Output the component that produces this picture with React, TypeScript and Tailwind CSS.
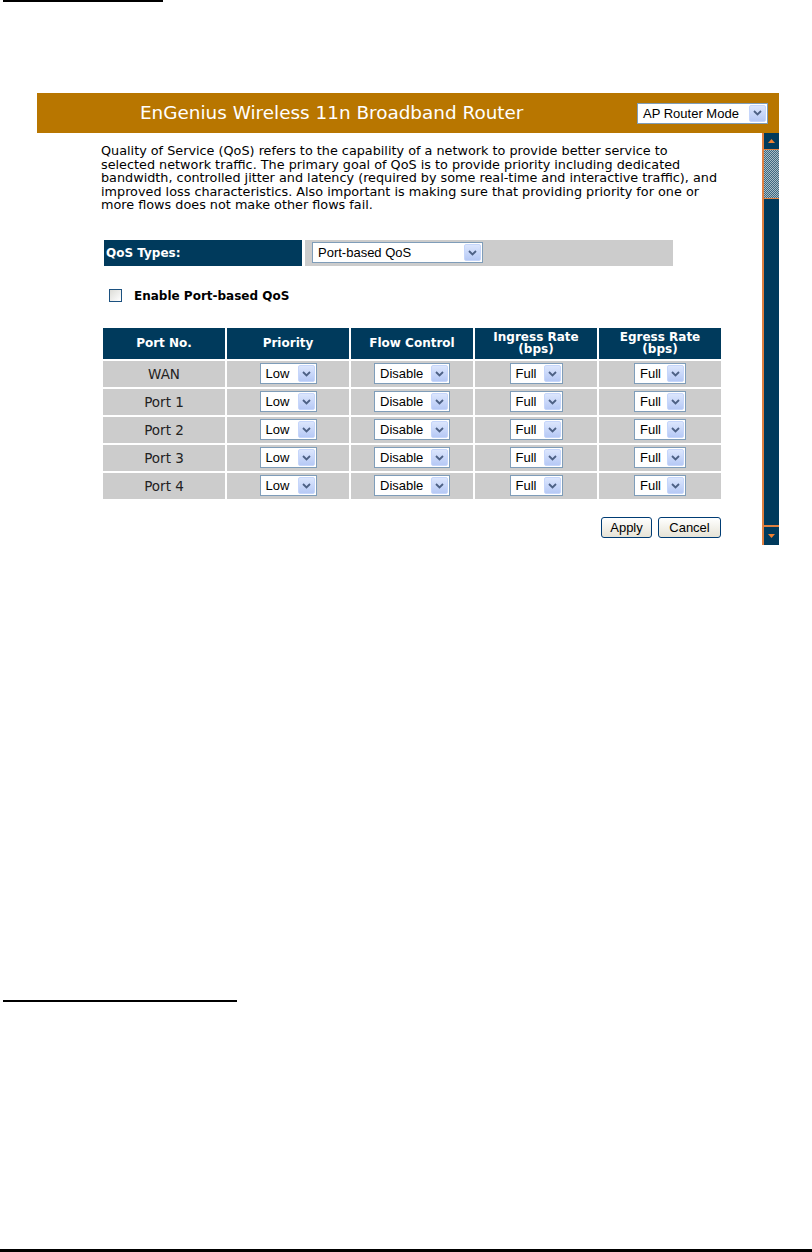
import React from "react";

const Chevron = () => (
  <svg width="9" height="6" viewBox="0 0 9 6">
    <path d="M1 1 L4.5 4.5 L8 1" fill="none" stroke="#4d6185" strokeWidth="1.8" />
  </svg>
);

function Select({ text, className }: { text: string; className: string }) {
  return (
    <div className={"flex h-[21px] items-center border border-[#7f9db9] bg-white " + className}>
      <span className="flex-1 whitespace-nowrap pl-[5px] font-['Liberation_Sans',Arial,sans-serif] text-[13px] leading-none text-black">
        {text}
      </span>
      <span className="mr-px flex h-[17px] w-[17px] items-center justify-center rounded-[2px] border border-[#c6d6fb] bg-gradient-to-b from-[#dce6fd] to-[#b6c9f5]">
        <Chevron />
      </span>
    </div>
  );
}

function Btn({ label, className }: { label: string; className: string }) {
  return (
    <div
      className={
        "flex h-[21px] items-center justify-center rounded-[3px] border border-[#003c74] bg-gradient-to-b from-[#ffffff] to-[#e6e3d6] font-['Liberation_Sans',Arial,sans-serif] text-[13px] text-black " +
        className
      }
    >
      {label}
    </div>
  );
}

const rows = ["WAN", "Port 1", "Port 2", "Port 3", "Port 4"];

export default function App() {
  return (
    <div className="relative h-[1252px] w-[812px] overflow-hidden bg-white font-['DejaVu_Sans',Verdana,sans-serif]">
      <div className="ml-[3px] h-[2px] w-[160px] bg-black" />
      <div className="h-[91px]" />
      <div className="ml-[37px] w-[742px]">
        {/* header */}
        <div className="flex h-[40px] items-center bg-[#b87600]">
          <div className="pl-[103px] text-[18.4px] text-white">EnGenius Wireless 11n Broadband Router</div>
          <div className="flex-1" />
          <Select text="AP Router Mode" className="mr-[11px] w-[131px]" />
        </div>
        {/* body */}
        <div className="flex h-[412px]">
          <div className="flex-1 pl-[64px] pt-[11px]">
            <p className="whitespace-nowrap text-[12.8px] leading-[13.6px] text-black">
              Quality of Service (QoS) refers to the capability of a network to provide better service to
              <br />
              selected network traffic. The primary goal of QoS is to provide priority including dedicated
              <br />
              bandwidth, controlled jitter and latency (required by some real-time and interactive traffic), and
              <br />
              improved loss characteristics. Also important is making sure that providing priority for one or
              <br />
              more flows does not make other flows fail.
            </p>
            <div className="ml-[3px] mt-[28px] flex h-[26px] w-[569px] gap-[3px]">
              <div className="flex w-[198px] items-center bg-[#003a5c] pl-[2px] text-[12px] font-bold text-white">QoS Types:</div>
              <div className="flex flex-1 items-center bg-[#cccccc] pl-[7px]">
                <Select text="Port-based QoS" className="w-[171px]" />
              </div>
            </div>
            <div className="ml-[8px] mt-[20px] flex h-[20px] items-center">
              <div className="h-[13px] w-[13px] border border-[#1c5180] bg-gradient-to-br from-[#dcdcd7] to-[#ffffff]" />
              <span className="ml-[12px] text-[12px] font-bold text-black">Enable Port-based QoS</span>
            </div>
            <div className="ml-[2px] mt-[22px] grid w-[618px] grid-cols-5 gap-[2px]">
              {["Port No.", "Priority", "Flow Control"].map((h) => (
                <div key={h} className="flex h-[31px] items-center justify-center bg-[#003a5c] text-[12px] font-bold text-white">
                  {h}
                </div>
              ))}
              {["Ingress Rate", "Egress Rate"].map((h) => (
                <div key={h} className="flex h-[31px] flex-col items-center justify-center bg-[#003a5c] text-[12px] font-bold leading-[12px] text-white">
                  <span>{h}</span>
                  <span>(bps)</span>
                </div>
              ))}
              {rows.map((r) => (
                <React.Fragment key={r}>
                  <div className="flex h-[26px] items-center justify-center bg-[#cccccc] text-[13.5px] text-[#222222]">{r}</div>
                  <div className="flex h-[26px] items-center justify-center bg-[#cccccc]">
                    <Select text="Low" className="w-[57px]" />
                  </div>
                  <div className="flex h-[26px] items-center justify-center bg-[#cccccc]">
                    <Select text="Disable" className="w-[76px]" />
                  </div>
                  <div className="flex h-[26px] items-center justify-center bg-[#cccccc]">
                    <Select text="Full" className="w-[53px]" />
                  </div>
                  <div className="flex h-[26px] items-center justify-center bg-[#cccccc]">
                    <Select text="Full" className="w-[52px]" />
                  </div>
                </React.Fragment>
              ))}
            </div>
            <div className="mt-[18px] flex w-[620px] justify-end gap-[6px]">
              <Btn label="Apply" className="w-[51px]" />
              <Btn label="Cancel" className="w-[63px]" />
            </div>
          </div>
          {/* scrollbar */}
          <div className="flex w-[17px] flex-col border-l-2 border-[#e08040] bg-[#003a5c]">
            <div className="flex h-[17px] items-center justify-center border-b border-[#e08040] bg-[#003a5c]">
              <svg width="7" height="4" viewBox="0 0 7 4">
                <path d="M0 4 L3.5 0 L7 4 Z" fill="#f08030" />
              </svg>
            </div>
            <div className="h-[49px] border-b border-[#e08040] bg-[repeating-conic-gradient(#3d6780_0%_25%,#a8bcc6_0%_50%)] bg-[length:2px_2px]" />
            <div className="flex-1" />
            <div className="flex h-[20px] items-center justify-center border-t-2 border-[#e08040] bg-[#003a5c]">
              <svg width="7" height="4" viewBox="0 0 7 4">
                <path d="M0 0 L3.5 4 L7 0 Z" fill="#f08030" />
              </svg>
            </div>
          </div>
        </div>
      </div>
      <div className="absolute left-[3px] top-[1000px] h-[1.5px] w-[234px] bg-black" />
      <div className="absolute bottom-0 left-0 h-[3px] w-[812px] bg-black" />
    </div>
  );
}
